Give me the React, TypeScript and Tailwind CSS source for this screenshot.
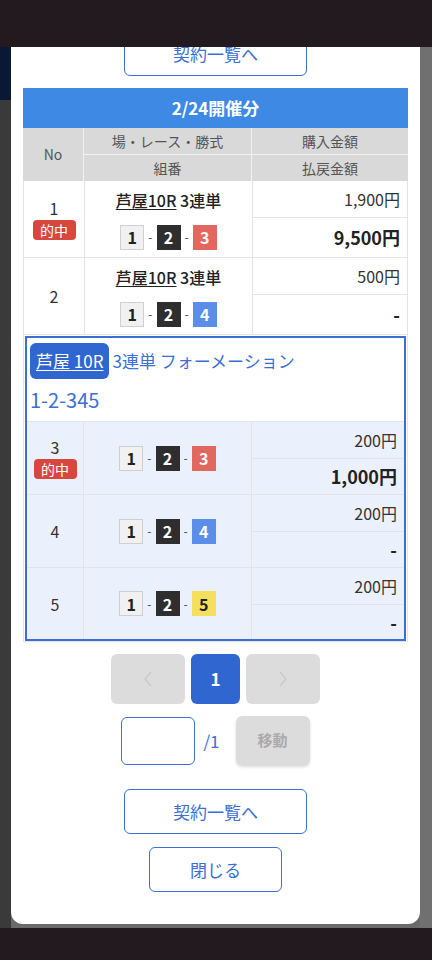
import type { ReactNode } from 'react';

const boxStyles: Record<number, string> = {
  1: 'bg-[#f1f1f1] border border-[#cfcfcf] text-[#222]',
  2: 'bg-[#2e2e2e] text-white',
  3: 'bg-[#e1675f] text-white',
  4: 'bg-[#5a8ee8] text-white',
  5: 'bg-[#f4e05c] text-[#222]',
};

function Box({ n }: { n: number }) {
  return (
    <span
      className={`inline-flex h-[25px] w-[24px] items-center justify-center text-[16px] font-bold leading-none ${boxStyles[n]}`}
    >
      {n}
    </span>
  );
}

function Combo({ nums }: { nums: number[] }) {
  return (
    <div className="flex items-center justify-center">
      {nums.map((n, i) => (
        <span key={i} className="flex items-center">
          {i > 0 && <span className="mx-[4px] text-[12px] text-[#444]">-</span>}
          <Box n={n} />
        </span>
      ))}
    </div>
  );
}

function Hit() {
  return (
    <span className="mt-[2px] inline-flex h-[20px] w-[43px] items-center justify-center rounded-[4px] bg-[#d8473d] text-[14px] text-white">
      的中
    </span>
  );
}

function Row({
  no,
  hit,
  title,
  nums,
  buy,
  pay,
  inner,
  h,
  last,
}: {
  no: number;
  hit?: boolean;
  title?: boolean;
  nums: number[];
  buy: string;
  pay: string;
  inner?: boolean;
  h: string;
  last?: boolean;
}) {
  return (
    <div className={`flex ${h} ${last ? '' : 'border-b border-[#e4e4e4]'} ${inner ? 'bg-[#ebf1fc]' : 'bg-white'}`}>
      <div
        className={`flex ${inner ? 'w-[57px]' : 'w-[61px]'} flex-col items-center justify-center border-r border-[#e4e4e4] text-[16px] text-[#333]`}
      >
        <span className="leading-[20px]">{no}</span>
        {hit && <Hit />}
      </div>
      <div className="flex w-[168px] flex-col items-center justify-center gap-[14px] border-r border-[#e4e4e4]">
        {title && (
          <div className="text-[16px] font-medium leading-[22px] text-[#222]">
            <span className="underline underline-offset-2">芦屋10R</span> 3連単
          </div>
        )}
        <Combo nums={nums} />
      </div>
      <div className="flex flex-1 flex-col">
        <div className="flex h-[37px] items-center justify-end border-b border-[#e4e4e4] pr-[7px] text-[16px] text-[#333]">
          {buy}
        </div>
        <div className="flex flex-1 items-center justify-end pr-[7px] text-[18px] font-bold text-[#222]">
          {pay}
        </div>
      </div>
    </div>
  );
}

function OutlineButton({ children, className }: { children: ReactNode; className?: string }) {
  return (
    <button
      className={`flex h-[45px] items-center justify-center rounded-[6px] border-[1.5px] border-[#3b6fd6] bg-white text-[17px] text-[#3b6fd6] ${className ?? ''}`}
    >
      {children}
    </button>
  );
}

function Chevron({ dir }: { dir: 'l' | 'r' }) {
  return (
    <svg width="10" height="18" viewBox="0 0 10 18" fill="none">
      <polyline
        points={dir === 'l' ? '8,2 2,9 8,16' : '2,2 8,9 2,16'}
        stroke="#c9c9c9"
        strokeWidth="1.3"
      />
    </svg>
  );
}

export default function App() {
  return (
    <div className="flex h-[960px] w-[432px] flex-col overflow-hidden bg-[#231a20] font-['Noto_Sans_CJK_JP','Noto_Sans',sans-serif]">
      <div className="h-[47px] shrink-0 bg-[#231a20]" />
      <div className="flex h-[881px] shrink-0">
        <div className="flex w-[11px] flex-col">
          <div className="h-[53px] bg-[#0b1833]" />
          <div className="flex-1 bg-[#3a3a3a]" />
        </div>
        <div className="flex w-[409px] flex-col bg-[#6a6a6a]">
          <div className="flex h-[877px] flex-col items-center overflow-hidden rounded-b-[12px] bg-white px-[12px]">
            {/* list button scrolled partly out of view */}
            <OutlineButton className="mt-[-16px] w-[183px] shrink-0">契約一覧へ</OutlineButton>

            <div className="mt-[12px] w-full">
              <div className="flex h-[40px] items-center justify-center bg-[#3d89e3] text-[17px] font-bold text-white">
                2/24開催分
              </div>
              <div className="flex bg-[#d9d9d9] text-[14px] text-[#555]">
                <div className="flex w-[61px] items-center justify-center border-r border-[#f2f2f2]">No</div>
                <div className="flex w-[168px] flex-col border-r border-[#f2f2f2]">
                  <div className="flex h-[27px] items-center justify-center border-b border-[#f2f2f2]">
                    場・レース・勝式
                  </div>
                  <div className="flex h-[26px] items-center justify-center">組番</div>
                </div>
                <div className="flex flex-1 flex-col">
                  <div className="flex h-[27px] items-center justify-center border-b border-[#f2f2f2]">
                    購入金額
                  </div>
                  <div className="flex h-[26px] items-center justify-center">払戻金額</div>
                </div>
              </div>
              <div className="border-x border-b border-[#e4e4e4]">
                <Row h="h-[77px]" no={1} hit title nums={[1, 2, 3]} buy="1,900円" pay="9,500円" />
                <Row h="h-[77px]" no={2} title nums={[1, 2, 4]} buy="500円" pay="-" />
                <div className="px-[1px] pt-[1px]">
                  <div className="border-2 border-[#3a6fd6]">
                    <div className="bg-white px-[3px] pt-[5px]">
                      <div className="flex items-center">
                        <span className="flex h-[36px] items-center rounded-[6px] bg-[#2f66d0] px-[6px] text-[17px] text-white underline underline-offset-2">
                          芦屋 10R
                        </span>
                        <span className="ml-[3px] text-[17px] text-[#3a6fd6]">3連単 フォーメーション</span>
                      </div>
                      <div className="flex h-[42px] items-center text-[20px] text-[#3a6fd6]">1-2-345</div>
                    </div>
                    <div className="border-t border-[#e0e4ec]">
                      <Row inner h="h-[73px]" no={3} hit nums={[1, 2, 3]} buy="200円" pay="1,000円" />
                      <Row inner h="h-[73px]" no={4} nums={[1, 2, 4]} buy="200円" pay="-" />
                      <Row inner last h="h-[71px]" no={5} nums={[1, 2, 5]} buy="200円" pay="-" />
                    </div>
                  </div>
                </div>
              </div>
            </div>

            <div className="mt-[12px] flex gap-[6px]">
              <button className="flex h-[50px] w-[74px] items-center justify-center rounded-[6px] bg-[#dcdcdc]">
                <Chevron dir="l" />
              </button>
              <button className="flex h-[50px] w-[49px] items-center justify-center rounded-[6px] bg-[#2f66d0] text-[17px] font-bold text-white">
                1
              </button>
              <button className="flex h-[50px] w-[74px] items-center justify-center rounded-[6px] bg-[#dcdcdc]">
                <Chevron dir="r" />
              </button>
            </div>

            <div className="mt-[12px] flex items-center">
              <input
                className="h-[48px] w-[74px] rounded-[6px] border border-[#3b6fd6] bg-white outline-none"
                type="text"
              />
              <span className="ml-[8px] text-[17px] text-[#3b6fd6]">/1</span>
              <button className="ml-[16px] flex h-[49px] w-[74px] items-center justify-center rounded-[6px] bg-[#dcdcdc] text-[15px] font-bold text-[#aaa] shadow-[0_2px_3px_rgba(0,0,0,0.15)]">
                移動
              </button>
            </div>

            <OutlineButton className="mt-[24px] w-[183px]">契約一覧へ</OutlineButton>
            <OutlineButton className="mt-[13px] w-[133px]">閉じる</OutlineButton>
          </div>
        </div>
        <div className="w-[12px] bg-[#707070]" />
      </div>
      <div className="flex-1 bg-[#231a20]" />
    </div>
  );
}
